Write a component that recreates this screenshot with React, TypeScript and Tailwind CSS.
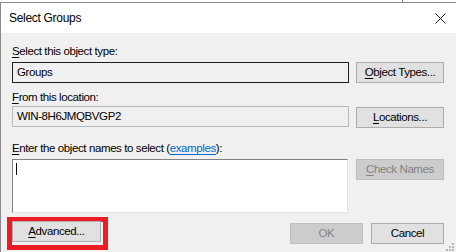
import React from "react";

function U({ children }: { children: React.ReactNode }) {
  return <span className="underline underline-offset-[2px] decoration-[1px]">{children}</span>;
}

function Btn({
  children,
  w,
  disabled = false,
}: {
  children: React.ReactNode;
  w: string;
  disabled?: boolean;
}) {
  return (
    <div
      className={
        "h-[21px] flex items-center justify-center border " +
        w +
        (disabled
          ? " bg-[#cccccc] border-[#bfbfbf] text-[#838383]"
          : " bg-[#e1e1e1] border-[#adadad] text-black")
      }
    >
      {children}
    </div>
  );
}

export default function App() {
  return (
    <div
      className="w-[456px] h-[252px] overflow-hidden bg-white text-[11.5px] tracking-[-0.4px] leading-[15px] text-black"
      style={{ fontFamily: '"Liberation Sans", Arial, sans-serif' }}
    >
      <div className="h-[2px] flex">
        <div className="w-[402px]" />
        <div className="w-px bg-[#8a8a8a]" />
      </div>
      <div className="h-[250px] border-t border-l border-[#8a8a8a] flex flex-col relative">
        <div className="h-[30px] bg-white flex items-center justify-between pl-[8px] pr-[10px]">
          <span className="text-[12px] tracking-[-0.3px] pt-[1px]">Select Groups</span>
          <svg width="11" height="11" viewBox="0 0 11 11">
            <path d="M0.5 0.5 L10.5 10.5 M10.5 0.5 L0.5 10.5" stroke="#1a1a1a" strokeWidth="1" />
          </svg>
        </div>
        <div className="flex-1 bg-[#f0f0f0] pl-[11px] pr-[11px] flex flex-col">
          <div className="mt-[11px] h-[15px]">
            <U>S</U>elect this object type:
          </div>
          <div className="mt-[3px] flex gap-[7px]">
            <div className="w-[337px] h-[21px] border border-[#1e1e1e] flex items-center pl-[4px]">
              Groups
            </div>
            <Btn w="w-[88px]"><span><U>O</U>bject Types...</span></Btn>
          </div>
          <div className="mt-[7px] h-[15px]">
            <U>F</U>rom this location:
          </div>
          <div className="mt-[1px] flex gap-[7px]">
            <div className="w-[337px] h-[21px] border border-[#b9b9b9] flex items-center pl-[4px]">
              WIN-8H6JMQBVGP2
            </div>
            <div className="mt-[1px]">
              <Btn w="w-[88px]"><span><U>L</U>ocations...</span></Btn>
            </div>
          </div>
          <div className="mt-[13px] h-[15px]">
            <U>E</U>nter the object names to select (
            <span className="text-[#0066cc] underline underline-offset-[2px]">examples</span>):
          </div>
          <div className="mt-[3px] flex gap-[8px]">
            <div className="w-[336px] h-[54px] bg-white border-t border-l border-[#828282] border-b border-r border-b-[#e3e3e3] border-r-[#e3e3e3] pl-[3px] pt-[3px]">
              <div className="w-px h-[12px] bg-black" />
            </div>
            <Btn w="w-[88px]" disabled>
              <span><U>C</U>heck Names</span>
            </Btn>
          </div>
          <div className="mt-[10px] flex items-start">
            <div className="-ml-[5px] -mt-[6px] border-[5px] border-[#ed1c24] pr-[2px] pb-[1px] w-[101px] h-[33px] ">
              <div className="-mt-[1px]">
                <Btn w="w-[89px]"><span><U>A</U>dvanced...</span></Btn>
              </div>
            </div>
            <div className="ml-[182px]">
              <Btn w="w-[73px]" disabled>OK</Btn>
            </div>
            <div className="ml-[8px]">
              <Btn w="w-[73px]">Cancel</Btn>
            </div>
          </div>
        </div>
        <svg width="8" height="8" viewBox="0 0 8 8" className="absolute right-[2px] bottom-[1px]">
          <rect x="6" y="0" width="2" height="2" fill="#b8b8b8" />
          <rect x="3" y="3" width="2" height="2" fill="#b8b8b8" />
          <rect x="6" y="3" width="2" height="2" fill="#b8b8b8" />
          <rect x="0" y="6" width="2" height="2" fill="#b8b8b8" />
          <rect x="3" y="6" width="2" height="2" fill="#b8b8b8" />
          <rect x="6" y="6" width="2" height="2" fill="#b8b8b8" />
        </svg>
      </div>
    </div>
  );
}
